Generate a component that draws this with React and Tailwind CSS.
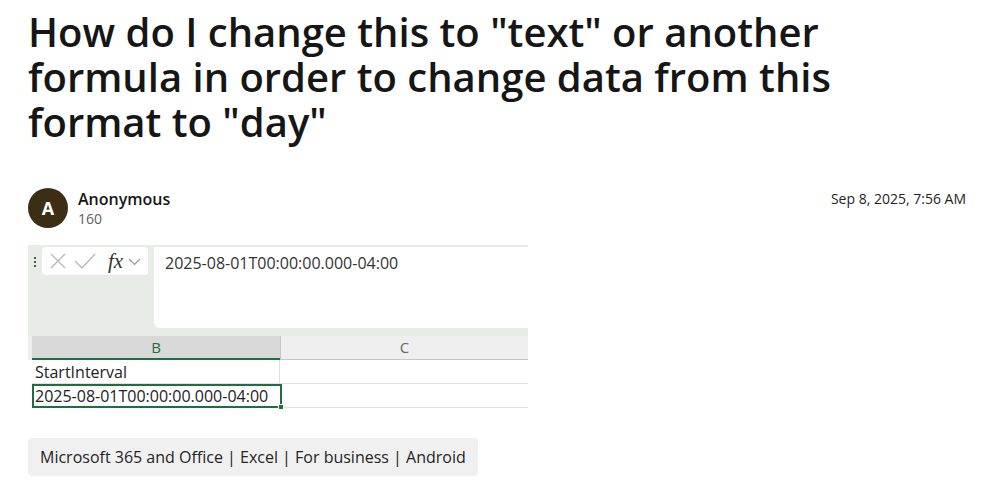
import React from 'react';

const font = { fontFamily: '"Segoe UI", "Open Sans", "Noto Sans", sans-serif' };

// formula bar + grid from the screenshot in the post
const ExcelShot = () => (
  <div className="w-[500px] bg-white" style={{ fontFamily: '"Open Sans", "Noto Sans", sans-serif' }}>
    <div className="flex h-[91px] bg-[#e8ece6] pt-[2px]">
      <div className="flex w-[14px] flex-col items-center gap-[2px] pt-[10px]">
        <span className="h-[2px] w-[2px] bg-[#555]" />
        <span className="h-[2px] w-[2px] bg-[#555]" />
        <span className="h-[2px] w-[2px] bg-[#555]" />
      </div>
      <div className="flex h-[28px] w-[106px] items-center gap-[5px] rounded-[4px] bg-white pl-[6px]">
        <svg width="20" height="20" viewBox="0 0 20 20" fill="none" stroke="#b8b8b8" strokeWidth="1.4">
          <path d="M3 3l14 14M17 3L3 17" />
        </svg>
        <svg width="24" height="20" viewBox="0 0 24 20" fill="none" stroke="#b8b8b8" strokeWidth="1.4">
          <path d="M2 10l7 7L22 3" />
        </svg>
        <span className="ml-[6px] text-[21px] italic leading-none text-[#333]" style={{ fontFamily: '"Liberation Serif", serif' }}>fx</span>
        <svg width="13" height="10" viewBox="0 0 13 10" fill="none" stroke="#999" strokeWidth="1.2">
          <path d="M1 3l5.5 5.5L12 3" />
        </svg>
      </div>
      <div className="ml-[6px] h-[81px] flex-1 rounded-bl-[6px] bg-white pl-[11px] pt-[4px] text-[16px] text-[#333]">
        2025-08-01T00:00:00.000-04:00
      </div>
    </div>
    <div className="flex h-[24px] text-[15px] leading-none">
      <div className="flex w-[4px] bg-[#efefef]" />
      <div className="flex w-[248px] items-center justify-center border-b-2 border-[#1e6e42] bg-[#d9d9d9] text-[#1e6e42]">B</div>
      <div className="flex flex-1 items-center justify-center border-b border-l border-[#c6c6c6] bg-[#efefef] text-[#666]">C</div>
    </div>
    <div className="flex h-[24px] text-[16px] text-[#222]">
      <div className="w-[4px]" />
      <div className="flex w-[248px] items-center border-b border-r border-[#e1e1e1] pl-[3px]">StartInterval</div>
      <div className="flex-1 border-b border-[#e1e1e1]" />
    </div>
    <div className="flex h-[24px] text-[16px] text-[#222]">
      <div className="w-[4px]" />
      <div className="relative flex w-[250px] items-center border-2 border-[#1e6e42] pl-[1px]">
        2025-08-01T00:00:00.000-04:00
        <span className="absolute -bottom-[4px] -right-[4px] h-[6px] w-[6px] border border-white bg-[#1e6e42]" />
      </div>
      <div className="flex-1 border-b border-[#e1e1e1]" />
    </div>
    <div className="h-[2px]" />
  </div>
);

export default function App() {
  return (
    <div className="min-h-screen bg-white px-[28px] pt-[9px] text-[#161616]" style={font}>
      <h1 className="max-w-[830px] text-[40px] font-semibold leading-[45px] text-[#161616]">
        How do I change this to "text" or another formula in order to change data from this format to "day"
      </h1>
      <div className="mt-[44px] flex items-start justify-between">
        <div className="flex items-center gap-[10px]">
          <div className="flex h-[40px] w-[40px] items-center justify-center rounded-full bg-[#3b2e14] text-[18px] font-bold text-white">A</div>
          <div className="flex flex-col">
            <span className="text-[16px] font-semibold leading-[21px]">Anonymous</span>
            <span className="text-[14px] leading-[18px] text-[#616161]">160</span>
          </div>
        </div>
        <span className="mr-[-4px] text-[14px] text-[#242424]">Sep 8, 2025, 7:56 AM</span>
      </div>
      <div className="mt-[17px]">
        <ExcelShot />
      </div>
      <div className="mt-[28px] inline-flex h-[38px] items-center rounded-[4px] bg-[#f0f0f0] px-[12px] text-[16px] text-[#242424]">
        Microsoft 365 and Office | Excel | For business | Android
      </div>
    </div>
  );
}
